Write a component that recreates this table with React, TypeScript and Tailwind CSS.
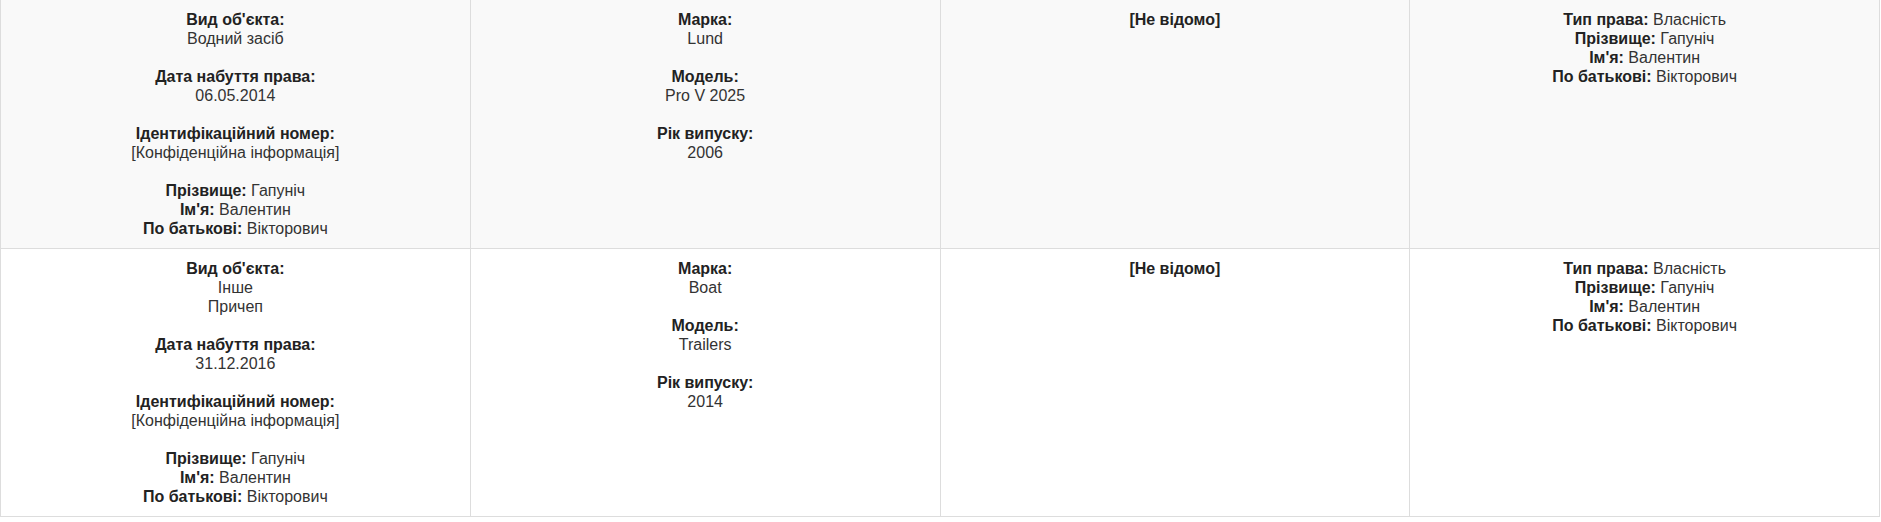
type Field = { label: string; value?: string };

type Row = {
  object: { kind: string[]; date: string; id: string; owner: Field[] };
  vehicle: Field[];
  extra: string;
  rights: Field[];
};

const owner: Field[] = [
  { label: "Прізвище:", value: "Гапуніч" },
  { label: "Ім'я:", value: "Валентин" },
  { label: "По батькові:", value: "Вікторович" },
];

const rows: Row[] = [
  {
    object: {
      kind: ["Водний засіб"],
      date: "06.05.2014",
      id: "[Конфіденційна інформація]",
      owner,
    },
    vehicle: [
      { label: "Марка:", value: "Lund" },
      { label: "Модель:", value: "Pro V 2025" },
      { label: "Рік випуску:", value: "2006" },
    ],
    extra: "[Не відомо]",
    rights: [{ label: "Тип права:", value: "Власність" }, ...owner],
  },
  {
    object: {
      kind: ["Інше", "Причеп"],
      date: "31.12.2016",
      id: "[Конфіденційна інформація]",
      owner,
    },
    vehicle: [
      { label: "Марка:", value: "Boat" },
      { label: "Модель:", value: "Trailers" },
      { label: "Рік випуску:", value: "2014" },
    ],
    extra: "[Не відомо]",
    rights: [{ label: "Тип права:", value: "Власність" }, ...owner],
  },
];

function Block({ label, lines }: { label: string; lines: string[] }) {
  return (
    <div className="mb-[19px] last:mb-0">
      <div className="font-bold text-[#222]">{label}</div>
      {lines.map((l, i) => (
        <div key={i}>{l}</div>
      ))}
    </div>
  );
}

function InlineList({ items }: { items: Field[] }) {
  return (
    <div>
      {items.map((f) => (
        <div key={f.label}>
          <b className="text-[#222]">{f.label}</b> {f.value}
        </div>
      ))}
    </div>
  );
}

const cell = "border border-[#ddd] px-2 py-[10px] align-top text-center";

export default function App() {
  return (
    <div className="bg-white text-[16px] leading-[19px] text-[#333] font-['Liberation_Sans',Arial,sans-serif]">
      <table className="-mt-px w-[1880px] table-fixed border-collapse">
        <tbody>
          {rows.map((r, i) => (
            <tr key={i} className={i % 2 === 0 ? "bg-[#f9f9f9]" : "bg-white"}>
              <td className={cell}>
                <Block label="Вид об'єкта:" lines={r.object.kind} />
                <Block label="Дата набуття права:" lines={[r.object.date]} />
                <Block label="Ідентифікаційний номер:" lines={[r.object.id]} />
                <InlineList items={r.object.owner} />
              </td>
              <td className={cell}>
                {r.vehicle.map((f) => (
                  <Block key={f.label} label={f.label} lines={[f.value ?? ""]} />
                ))}
              </td>
              <td className={cell}>
                <div className="font-bold text-[#222]">{r.extra}</div>
              </td>
              <td className={cell}>
                <InlineList items={r.rights} />
              </td>
            </tr>
          ))}
        </tbody>
      </table>
    </div>
  );
}
